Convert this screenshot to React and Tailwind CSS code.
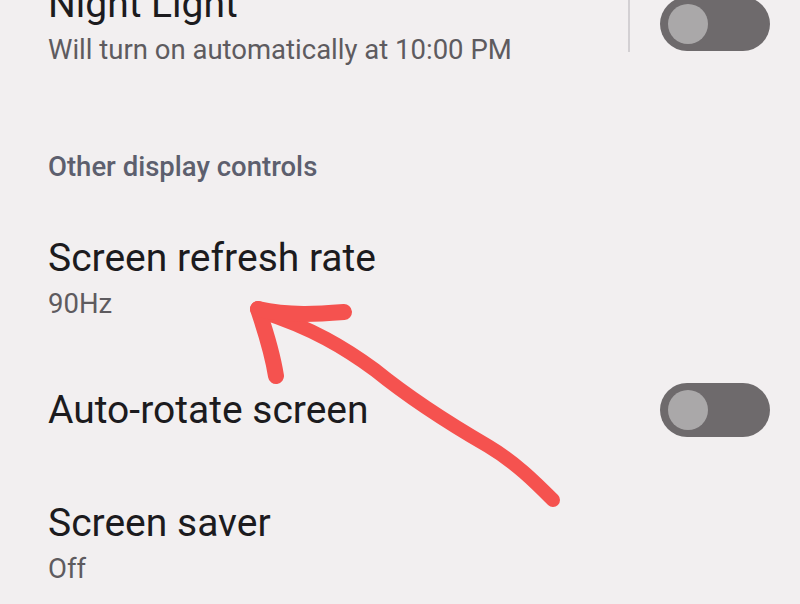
function Toggle() {
  return (
    <div className="w-[110px] h-[54px] rounded-full bg-[#6e6a6c] flex items-center pl-2 shrink-0">
      <div className="w-10 h-10 rounded-full bg-[#aaa8a9]" />
    </div>
  );
}

function Row({ title, subtitle, children, className = "" }) {
  return (
    <div className={"flex items-center pl-12 pr-[30px] " + className}>
      <div className="flex-1 flex flex-col gap-[7px]">
        <div className="text-[39px] leading-[46px] text-[#1c1b1e]">{title}</div>
        {subtitle && <div className="text-[27.5px] leading-[32px] text-[#5e5b5f]">{subtitle}</div>}
      </div>
      {children}
    </div>
  );
}

export default function App() {
  return (
    <div className="relative w-[800px] h-[604px] overflow-hidden bg-[#f2eff0] font-['Roboto',sans-serif]">
      <div className="flex flex-col">
        <Row title="Night Light" subtitle="Will turn on automatically at 10:00 PM" className="-mt-[19px]">
          <div className="w-[2px] h-[71px] bg-[#d3d0d3] self-start mr-[30px]" />
          <Toggle />
        </Row>

        <div className="pl-12 mt-[85px] text-[27.5px] leading-[32px] font-medium text-[#5d5f6e]">
          Other display controls
        </div>

        <Row title="Screen refresh rate" subtitle="90Hz" className="mt-[52px]" />

        <Row title="Auto-rotate screen" className="mt-[63px]">
          <Toggle />
        </Row>

        <Row title="Screen saver" subtitle="Off" className="mt-[63px]" />
      </div>

      {/* hand-drawn arrow */}
      <svg className="absolute inset-0 pointer-events-none" width="800" height="604" viewBox="0 0 800 604">
        <g fill="none" stroke="#f5524f" strokeLinecap="round" strokeLinejoin="round">
          <path d="M553 500 C535 482 515 462 488 446 C450 424 412 400 375 370 C345 348 312 328 262 312" strokeWidth="14" />
          <path d="M258 309 C265 330 272 350 276 376" strokeWidth="16" />
          <path d="M258 309 C290 316 318 314 344 312" strokeWidth="16" />
        </g>
      </svg>
    </div>
  );
}
